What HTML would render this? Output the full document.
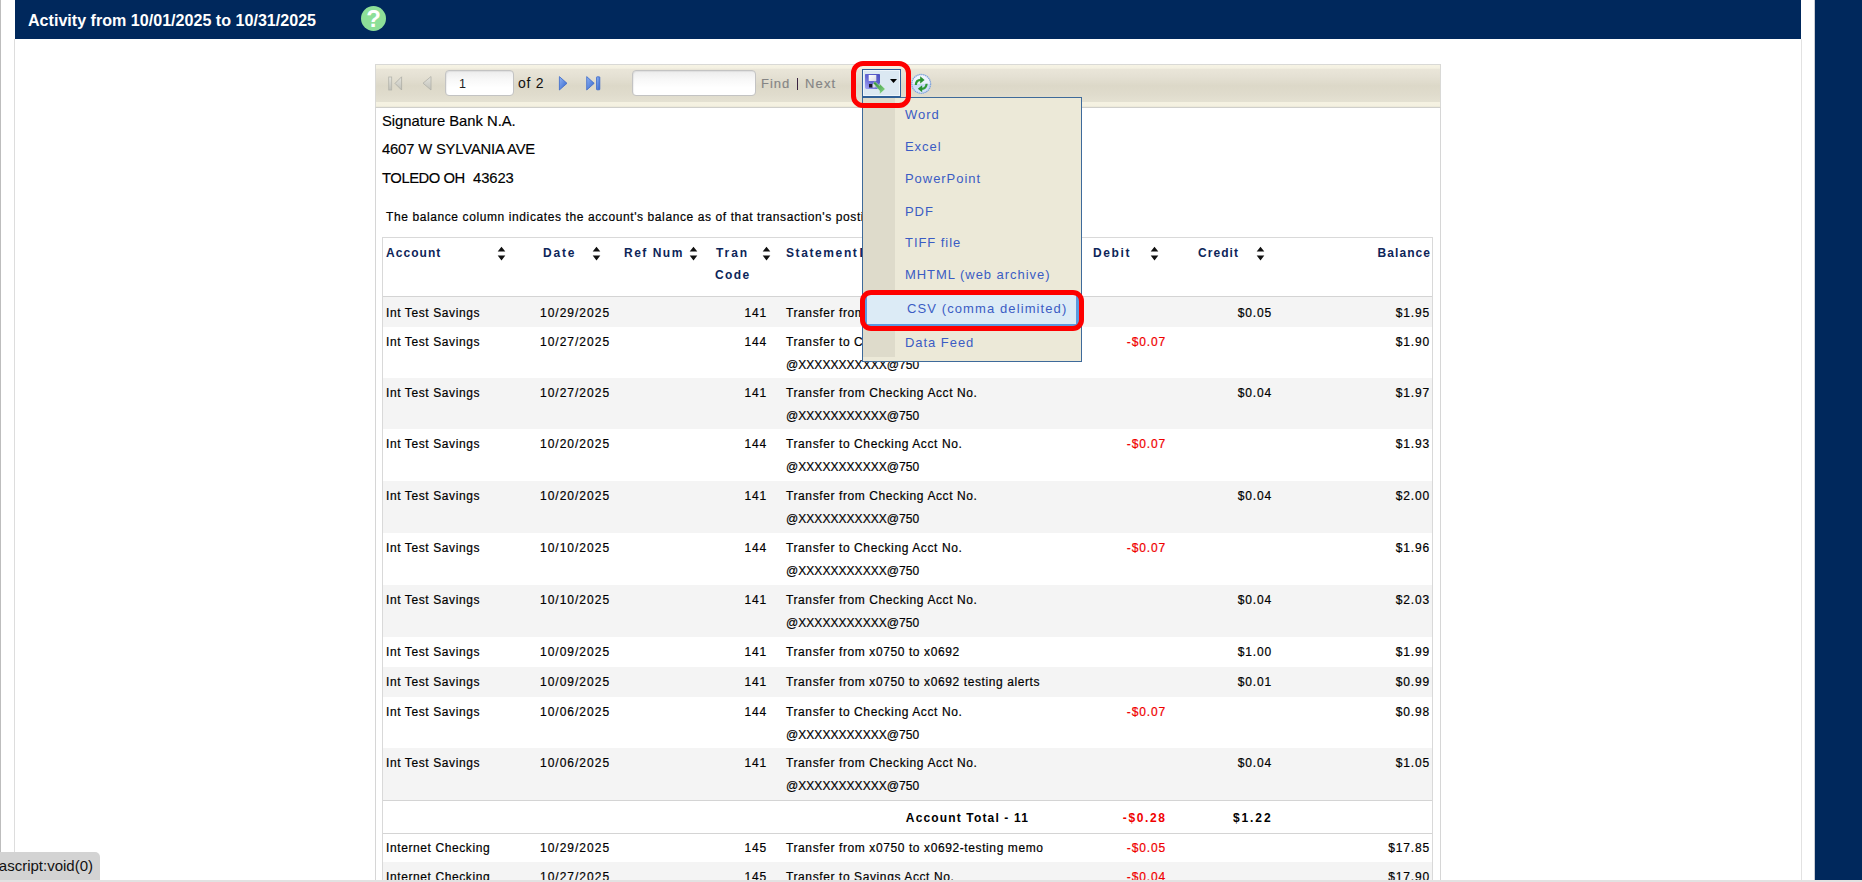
<!DOCTYPE html>
<html><head><meta charset="utf-8">
<style>
*{margin:0;padding:0;box-sizing:border-box}
html,body{width:1862px;height:882px;overflow:hidden;background:#fff;font-family:"Liberation Sans",sans-serif;position:relative}
.abs{position:absolute}
#lline{left:0;top:0;width:1px;height:882px;background:#bdbdbd}
#hdr{left:15px;top:0;width:1786px;height:39px;background:#00285c}
#hdr .t{left:13px;top:11px;color:#fff;font-weight:bold;font-size:16.1px;white-space:nowrap}
#help{left:361px;top:6px;width:25px;height:25px;border-radius:50%;background:#8ddf98;color:#fff;font-weight:bold;font-size:24px;text-align:center;line-height:26.5px}
#cl{left:14px;top:39px;width:1px;height:843px;background:#ddd}
#cr{left:1801px;top:39px;width:1px;height:843px;background:#e2e2e2}
#rbar{left:1814px;top:0;width:48px;height:882px;background:#00285c;border-left:1px solid #c8ccd4}
#bline{left:0;top:880px;width:1862px;height:2px;background:#e2e2e2}
#tb{left:375px;top:64px;width:1066px;height:44px;border:1px solid #d9d9d6;border-bottom-color:#cfcfcb;
 background:linear-gradient(#f6f3e4 0px,#f4f1e2 3px,#e9e5d8 4.5px,#e5e1d4 11px,#dcd8c8 21px,#e0dccd 30px,#e4e1d2 36.5px,#f5f2e2 37.5px,#f4f1e1 41px,#e6e3d3 42px)}
#rep{left:375px;top:107px;width:1066px;height:780px;border-left:1px solid #d6d6d6;border-right:1px solid #d6d6d6;background:#fff}
.txt{position:absolute;white-space:nowrap;color:#000}
.cell{position:absolute;white-space:nowrap;font-size:12px;letter-spacing:0.6px;color:#000;line-height:14px;-webkit-text-stroke:0.2px currentColor}
.dt{letter-spacing:1.0px}
.am{letter-spacing:0.85px}
.xx{letter-spacing:0.05px}
.r{text-align:right}
.hd{position:absolute;white-space:nowrap;font-weight:bold;color:#0d2559;font-size:12px;letter-spacing:1.05px;line-height:14px}
.row{position:absolute;left:383px;width:1049px}
.g{background:#f4f4f4}
.red{color:#f00000}
.mi{position:absolute;left:905px;font-size:13px;letter-spacing:0.95px;color:#3b5cc4;white-space:nowrap;line-height:14px}
.inp{border:1px solid #c3c3c3;border-radius:4px;background:linear-gradient(#ececec 0,#f8f8f8 35%,#fff 70%);box-shadow:inset 1px 1px 1px rgba(0,0,0,0.06)}
</style></head><body>
<div id="lline" class="abs"></div>
<div id="hdr" class="abs"><div class="t abs">Activity from 10/01/2025 to 10/31/2025</div></div>
<div id="help" class="abs">?</div>
<div id="cl" class="abs"></div>
<div id="cr" class="abs"></div>
<div id="rbar" class="abs"></div>
<div id="rep" class="abs"></div>
<div id="tb" class="abs"></div>

<svg class="abs" style="left:386px;top:74px" width="20" height="18" viewBox="0 0 20 18">
 <defs><linearGradient id="gg" x1="0" x2="0" y1="0" y2="1"><stop offset="0" stop-color="#e4e4de"/><stop offset="1" stop-color="#c0c0b8"/></linearGradient></defs>
 <rect x="2.7" y="3" width="3" height="13" fill="url(#gg)" stroke="#b4b4ac" stroke-width="0.8"/>
 <path d="M15.6 2.8 L9 9.4 L15.6 16 Z" fill="url(#gg)" stroke="#acaca4" stroke-width="0.8"/>
</svg>
<svg class="abs" style="left:421px;top:74px" width="12" height="18" viewBox="0 0 12 18">
 <path d="M10 2.5 L2 9.2 L10 16 Z" fill="url(#gg)" stroke="#b0b0a8" stroke-width="0.8"/>
</svg>
<div class="abs inp" style="left:445px;top:70px;width:69px;height:26px"></div>
<div class="txt" style="left:459px;top:77px;font-size:12.5px;color:#222">1</div>
<div class="txt" style="left:518px;top:74.6px;font-size:14px;color:#111;letter-spacing:0.75px">of 2</div>
<svg class="abs" style="left:557px;top:74px" width="12" height="18" viewBox="0 0 12 18">
 <defs><linearGradient id="bg1" x1="0" x2="1" y1="0" y2="1"><stop offset="0" stop-color="#90b4f4"/><stop offset="1" stop-color="#3062cc"/></linearGradient></defs>
 <path d="M2.4 2.6 L10 9.3 L2.4 16 Z" fill="url(#bg1)" stroke="#3b68c8" stroke-width="0.8"/>
</svg>
<svg class="abs" style="left:584px;top:74px" width="20" height="18" viewBox="0 0 20 18">
 <path d="M2.7 2.6 L10.2 9.3 L2.7 16 Z" fill="url(#bg1)" stroke="#3b68c8" stroke-width="0.8"/>
 <rect x="12.5" y="2.8" width="3.3" height="13" rx="0.6" fill="url(#bg1)" stroke="#3b68c8" stroke-width="0.8"/>
</svg>
<div class="abs inp" style="left:632px;top:70px;width:124px;height:26px"></div>
<div class="txt" style="left:761px;top:75.7px;font-size:13px;color:#858585;letter-spacing:0.95px;-webkit-text-stroke:0.15px #858585">Find</div>
<div class="abs" style="left:797px;top:78px;width:1.2px;height:12px;background:#3a2340"></div>
<div class="txt" style="left:805px;top:75.7px;font-size:13px;color:#858585;letter-spacing:1.15px;-webkit-text-stroke:0.15px #858585">Next</div>


<div class="txt" style="left:382px;top:112.5px;font-size:14.8px;letter-spacing:-0.02px;-webkit-text-stroke:0.15px #000">Signature Bank N.A.</div>
<div class="txt" style="left:382px;top:141px;font-size:14.8px;letter-spacing:-0.17px;-webkit-text-stroke:0.15px #000">4607 W SYLVANIA AVE</div>
<div class="txt" style="left:382px;top:170px;font-size:14.8px;letter-spacing:-0.45px;-webkit-text-stroke:0.15px #000">TOLEDO OH</div>
<div class="txt" style="left:473px;top:170px;font-size:14.8px;letter-spacing:-0.1px;-webkit-text-stroke:0.15px #000">43623</div>
<div class="cell" style="left:386px;top:209.8px">The balance column indicates the account's balance as of that transaction's posting date.</div>

<div class="abs" style="left:382px;top:237px;width:1051px;height:650px;border:1px solid #d9d9d9;border-bottom:none"></div>
<div class="abs" style="left:383px;top:296px;width:1049px;height:1px;background:#d4d4d4"></div>
<div class="row g" style="top:297.0px;height:29.6px">
 <span class="cell" style="left:3px;top:8.7px">Int Test Savings</span>
 <span class="cell dt" style="left:157px;top:8.7px">10/29/2025</span>
 <span class="cell am r" style="right:665px;top:8.7px">141</span>
 <span class="cell" style="left:403px;top:8.70px">Transfer from x0750 to x0692</span>
 <span class="cell am r" style="right:160px;top:8.7px">$0.05</span>
 <span class="cell am r" style="right:2px;top:8.7px">$1.95</span>
</div>
<div class="row" style="top:326.6px;height:51.0px">
 <span class="cell" style="left:3px;top:8.2px">Int Test Savings</span>
 <span class="cell dt" style="left:157px;top:8.2px">10/27/2025</span>
 <span class="cell am r" style="right:665px;top:8.2px">144</span>
 <span class="cell" style="left:403px;top:8.20px">Transfer to Checking Acct No.</span>
 <span class="cell xx" style="left:403px;top:31.00px">@XXXXXXXXXXX@750</span>
 <span class="cell am r red" style="right:266px;top:8.2px">-$0.07</span>
 <span class="cell am r" style="right:2px;top:8.2px">$1.90</span>
</div>
<div class="row g" style="top:377.6px;height:51.7px">
 <span class="cell" style="left:3px;top:8.2px">Int Test Savings</span>
 <span class="cell dt" style="left:157px;top:8.2px">10/27/2025</span>
 <span class="cell am r" style="right:665px;top:8.2px">141</span>
 <span class="cell" style="left:403px;top:8.20px">Transfer from Checking Acct No.</span>
 <span class="cell xx" style="left:403px;top:31.00px">@XXXXXXXXXXX@750</span>
 <span class="cell am r" style="right:160px;top:8.2px">$0.04</span>
 <span class="cell am r" style="right:2px;top:8.2px">$1.97</span>
</div>
<div class="row" style="top:429.3px;height:52.0px">
 <span class="cell" style="left:3px;top:8.2px">Int Test Savings</span>
 <span class="cell dt" style="left:157px;top:8.2px">10/20/2025</span>
 <span class="cell am r" style="right:665px;top:8.2px">144</span>
 <span class="cell" style="left:403px;top:8.20px">Transfer to Checking Acct No.</span>
 <span class="cell xx" style="left:403px;top:31.00px">@XXXXXXXXXXX@750</span>
 <span class="cell am r red" style="right:266px;top:8.2px">-$0.07</span>
 <span class="cell am r" style="right:2px;top:8.2px">$1.93</span>
</div>
<div class="row g" style="top:481.3px;height:51.6px">
 <span class="cell" style="left:3px;top:8.2px">Int Test Savings</span>
 <span class="cell dt" style="left:157px;top:8.2px">10/20/2025</span>
 <span class="cell am r" style="right:665px;top:8.2px">141</span>
 <span class="cell" style="left:403px;top:8.20px">Transfer from Checking Acct No.</span>
 <span class="cell xx" style="left:403px;top:31.00px">@XXXXXXXXXXX@750</span>
 <span class="cell am r" style="right:160px;top:8.2px">$0.04</span>
 <span class="cell am r" style="right:2px;top:8.2px">$2.00</span>
</div>
<div class="row" style="top:532.9px;height:51.8px">
 <span class="cell" style="left:3px;top:8.2px">Int Test Savings</span>
 <span class="cell dt" style="left:157px;top:8.2px">10/10/2025</span>
 <span class="cell am r" style="right:665px;top:8.2px">144</span>
 <span class="cell" style="left:403px;top:8.20px">Transfer to Checking Acct No.</span>
 <span class="cell xx" style="left:403px;top:31.00px">@XXXXXXXXXXX@750</span>
 <span class="cell am r red" style="right:266px;top:8.2px">-$0.07</span>
 <span class="cell am r" style="right:2px;top:8.2px">$1.96</span>
</div>
<div class="row g" style="top:584.7px;height:52.0px">
 <span class="cell" style="left:3px;top:8.2px">Int Test Savings</span>
 <span class="cell dt" style="left:157px;top:8.2px">10/10/2025</span>
 <span class="cell am r" style="right:665px;top:8.2px">141</span>
 <span class="cell" style="left:403px;top:8.20px">Transfer from Checking Acct No.</span>
 <span class="cell xx" style="left:403px;top:31.00px">@XXXXXXXXXXX@750</span>
 <span class="cell am r" style="right:160px;top:8.2px">$0.04</span>
 <span class="cell am r" style="right:2px;top:8.2px">$2.03</span>
</div>
<div class="row" style="top:636.7px;height:29.9px">
 <span class="cell" style="left:3px;top:8.2px">Int Test Savings</span>
 <span class="cell dt" style="left:157px;top:8.2px">10/09/2025</span>
 <span class="cell am r" style="right:665px;top:8.2px">141</span>
 <span class="cell" style="left:403px;top:8.20px">Transfer from x0750 to x0692</span>
 <span class="cell am r" style="right:160px;top:8.2px">$1.00</span>
 <span class="cell am r" style="right:2px;top:8.2px">$1.99</span>
</div>
<div class="row g" style="top:666.6px;height:30.2px">
 <span class="cell" style="left:3px;top:8.2px">Int Test Savings</span>
 <span class="cell dt" style="left:157px;top:8.2px">10/09/2025</span>
 <span class="cell am r" style="right:665px;top:8.2px">141</span>
 <span class="cell" style="left:403px;top:8.20px">Transfer from x0750 to x0692 testing alerts</span>
 <span class="cell am r" style="right:160px;top:8.2px">$0.01</span>
 <span class="cell am r" style="right:2px;top:8.2px">$0.99</span>
</div>
<div class="row" style="top:696.8px;height:51.4px">
 <span class="cell" style="left:3px;top:8.2px">Int Test Savings</span>
 <span class="cell dt" style="left:157px;top:8.2px">10/06/2025</span>
 <span class="cell am r" style="right:665px;top:8.2px">144</span>
 <span class="cell" style="left:403px;top:8.20px">Transfer to Checking Acct No.</span>
 <span class="cell xx" style="left:403px;top:31.00px">@XXXXXXXXXXX@750</span>
 <span class="cell am r red" style="right:266px;top:8.2px">-$0.07</span>
 <span class="cell am r" style="right:2px;top:8.2px">$0.98</span>
</div>
<div class="row g" style="top:748.2px;height:51.4px">
 <span class="cell" style="left:3px;top:8.2px">Int Test Savings</span>
 <span class="cell dt" style="left:157px;top:8.2px">10/06/2025</span>
 <span class="cell am r" style="right:665px;top:8.2px">141</span>
 <span class="cell" style="left:403px;top:8.20px">Transfer from Checking Acct No.</span>
 <span class="cell xx" style="left:403px;top:31.00px">@XXXXXXXXXXX@750</span>
 <span class="cell am r" style="right:160px;top:8.2px">$0.04</span>
 <span class="cell am r" style="right:2px;top:8.2px">$1.05</span>
</div>
<div class="abs" style="left:383px;top:799.6px;width:1049px;height:1px;background:#d4d4d4"></div>
<div class="row" style="top:800.6px;height:32px">
 <span class="hd r" style="color:#000;right:403px;top:10px;letter-spacing:1.15px">Account Total - 11</span>
 <span class="hd r red" style="right:265.5px;top:10px;letter-spacing:1.6px">-$0.28</span>
 <span class="hd r" style="color:#000;right:159.5px;top:10px;letter-spacing:1.9px">$1.22</span>
</div>
<div class="abs" style="left:383px;top:832.6px;width:1049px;height:1px;background:#d4d4d4"></div>
<div class="row" style="top:833.6px;height:28.5px">
 <span class="cell" style="left:3px;top:7.2px">Internet Checking</span>
 <span class="cell dt" style="left:157px;top:7.2px">10/29/2025</span>
 <span class="cell am r" style="right:665px;top:7.2px">145</span>
 <span class="cell" style="left:403px;top:7.20px">Transfer from x0750 to x0692-testing memo</span>
 <span class="cell am r red" style="right:266px;top:7.2px">-$0.05</span>
 <span class="cell am r" style="right:2px;top:7.2px">$17.85</span>
</div>
<div class="row g" style="top:862.1px;height:30px">
 <span class="cell" style="left:3px;top:7.7px">Internet Checking</span>
 <span class="cell dt" style="left:157px;top:7.7px">10/27/2025</span>
 <span class="cell am r" style="right:665px;top:7.7px">145</span>
 <span class="cell" style="left:403px;top:7.70px">Transfer to Savings Acct No.</span>
 <span class="cell am r red" style="right:266px;top:7.7px">-$0.04</span>
 <span class="cell am r" style="right:2px;top:7.7px">$17.90</span>
</div>

<span class="hd" style="left:386px;top:245.5px">Account</span>
<span class="hd" style="left:543px;top:245.5px;letter-spacing:1.8px">Date</span>
<span class="hd" style="left:624px;top:245.5px;letter-spacing:1.5px">Ref Num</span>
<span class="hd" style="left:716px;top:245.5px;letter-spacing:1.9px">Tran</span>
<span class="hd" style="left:715px;top:268.3px;letter-spacing:1.4px">Code</span>
<span class="hd" style="left:786px;top:245.5px;letter-spacing:1.6px;word-spacing:-3.8px">Statement Description</span>
<span class="hd" style="left:1093px;top:245.5px;letter-spacing:1.6px">Debit</span>
<span class="hd" style="left:1198px;top:245.5px">Credit</span>
<span class="hd r" style="right:431px;top:245.5px">Balance</span>

<svg class="abs" style="left:497px;top:246px" width="9" height="15" viewBox="0 0 9 15"><path d="M4.5 0.8 L8.3 5.6 L0.7 5.6 Z M4.5 14.6 L8.3 9.5 L0.7 9.5 Z" fill="#111"/></svg>
<svg class="abs" style="left:592px;top:246px" width="9" height="15" viewBox="0 0 9 15"><path d="M4.5 0.8 L8.3 5.6 L0.7 5.6 Z M4.5 14.6 L8.3 9.5 L0.7 9.5 Z" fill="#111"/></svg>
<svg class="abs" style="left:689px;top:246px" width="9" height="15" viewBox="0 0 9 15"><path d="M4.5 0.8 L8.3 5.6 L0.7 5.6 Z M4.5 14.6 L8.3 9.5 L0.7 9.5 Z" fill="#111"/></svg>
<svg class="abs" style="left:762px;top:246px" width="9" height="15" viewBox="0 0 9 15"><path d="M4.5 0.8 L8.3 5.6 L0.7 5.6 Z M4.5 14.6 L8.3 9.5 L0.7 9.5 Z" fill="#111"/></svg>
<svg class="abs" style="left:1150px;top:246px" width="9" height="15" viewBox="0 0 9 15"><path d="M4.5 0.8 L8.3 5.6 L0.7 5.6 Z M4.5 14.6 L8.3 9.5 L0.7 9.5 Z" fill="#111"/></svg>
<svg class="abs" style="left:1256px;top:246px" width="9" height="15" viewBox="0 0 9 15"><path d="M4.5 0.8 L8.3 5.6 L0.7 5.6 Z M4.5 14.6 L8.3 9.5 L0.7 9.5 Z" fill="#111"/></svg>

<div class="abs" style="left:862px;top:96.5px;width:220px;height:265px;border:1px solid #3e6a9a;background:#ece9d8"></div>
<div class="abs" style="left:863px;top:97.5px;width:32px;height:259.5px;background:#dedbcb"></div>
<div class="abs" style="left:862px;top:69px;width:39px;height:29px;border:1px solid #2e5f97;border-bottom-width:2px;background:#dbe8f2;box-shadow:inset 1px 1px 0 #eef5fb,inset -1px -1px 0 #eef5fb"></div>
<div class="abs" style="left:865px;top:292px;width:214px;height:34px;background:#dcebf6;border:1px solid #5b9ae0;border-left-width:2px;border-right-width:3px;border-bottom-width:2px"></div>
<div class="mi" style="top:108px">Word</div>
<div class="mi" style="top:140px">Excel</div>
<div class="mi" style="top:172px">PowerPoint</div>
<div class="mi" style="top:204.5px">PDF</div>
<div class="mi" style="top:236px">TIFF file</div>
<div class="mi" style="top:268px">MHTML (web archive)</div>
<div class="mi" style="top:302px;left:907px;letter-spacing:1.1px">CSV (comma delimited)</div>
<div class="mi" style="top:336px">Data Feed</div>
<div class="abs" style="left:851px;top:61px;width:60px;height:47px;border:5px solid #fe0000;border-radius:12px"></div>
<div class="abs" style="left:860px;top:290px;width:224px;height:41px;border:5px solid #fe0000;border-radius:11px"></div>
<div class="abs" style="left:0;top:852px;width:100px;height:28px;background:#d3d3d3;border-top-right-radius:5px;overflow:hidden">
 <div class="txt" style="right:7px;top:5px;font-size:15px;color:#111">ascript:void(0)</div>
</div>


<svg class="abs" style="left:864px;top:73px" width="26" height="24" viewBox="0 0 26 24">
 <defs>
  <linearGradient id="fl" x1="0" x2="1" y1="1" y2="0"><stop offset="0" stop-color="#a8aaf8"/><stop offset="0.45" stop-color="#6668d4"/><stop offset="1" stop-color="#4d4fc0"/></linearGradient>
  <linearGradient id="lb" x1="0" x2="1" y1="0" y2="1"><stop offset="0" stop-color="#ffffff"/><stop offset="1" stop-color="#d8d8e4"/></linearGradient>
  <linearGradient id="ar" x1="0" x2="1" y1="0" y2="1"><stop offset="0" stop-color="#2f8f34"/><stop offset="1" stop-color="#8ad88a"/></linearGradient>
 </defs>
 <path d="M1 1.5 Q1 1 1.5 1 L15.5 1 L16 1.5 L16 15.5 Q16 16 15.5 16 L2 16 L1 15 Z" fill="url(#fl)"/>
 <rect x="4.7" y="2" width="7.6" height="6" fill="url(#lb)"/>
 <rect x="5" y="11" width="3.6" height="3.5" fill="#1a1a2a"/>
 <rect x="8.6" y="11" width="3" height="3.5" fill="#d8d8e8"/>
 <path d="M9.2 10.2 L11 8.6 L15.6 12.8 L15.4 10.6 L21.2 16 L15.8 21 L15.8 18 Z" fill="url(#ar)" stroke="#e8f4ea" stroke-width="0.4"/>
</svg>
<svg class="abs" style="left:889px;top:78px" width="9" height="6" viewBox="0 0 9 6"><path d="M1 1 L8 1 L4.5 5 Z" fill="#000"/></svg>
<svg class="abs" style="left:910px;top:73px" width="22" height="22" viewBox="0 0 22 22">
 <defs><linearGradient id="rf" x1="0" x2="0" y1="0" y2="1"><stop offset="0" stop-color="#f4f7fe"/><stop offset="0.5" stop-color="#e6eefb"/><stop offset="0.5" stop-color="#c6daf6"/><stop offset="1" stop-color="#dbe7fb"/></linearGradient></defs>
 <circle cx="11.2" cy="10.9" r="9.4" fill="url(#rf)" stroke="#7fa3dd" stroke-width="1.3" stroke-dasharray="1.4 0.6"/>
 <path d="M5.8 12 C6 8.5 8 6.8 10.8 6.8" fill="none" stroke="#2f9a36" stroke-width="2.2"/>
 <path d="M10.2 3.2 L14.6 6.9 L10.2 10.4 Z" fill="#2a9230"/>
 <path d="M16.6 10.8 C16.4 14.2 14.4 15.8 11.6 15.8" fill="none" stroke="#2f9a36" stroke-width="2.2"/>
 <path d="M12.2 12.3 L7.8 15.8 L12.2 19.2 Z" fill="#2a9230"/>
</svg>

<div id="bline" class="abs"></div>
</body></html>
